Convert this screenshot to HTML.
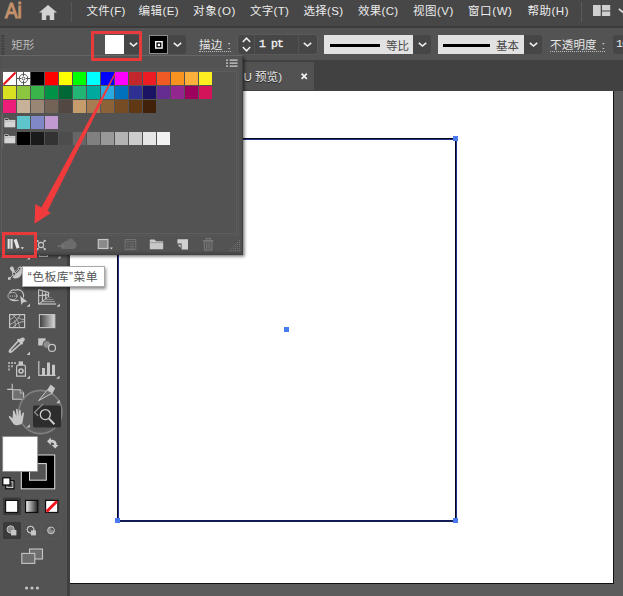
<!DOCTYPE html>
<html lang="zh"><head><meta charset="utf-8"><title>Ai</title>
<style>
*{box-sizing:border-box;margin:0;padding:0}
html,body{width:623px;height:596px;overflow:hidden;background:#535353}
body{position:relative;font-family:"Liberation Sans","Noto Sans CJK SC",sans-serif;font-size:12px;color:#e6e6e6}
.abs{position:absolute}
svg{position:absolute;overflow:visible}
.sw svg{position:static}
#menubar{left:0;top:0;width:623px;height:26px;background:#474747}
#menubar span.m{position:absolute;top:2.2px;line-height:18px;font-size:11.5px;color:#ececec;white-space:nowrap;letter-spacing:.3px}
#msep{left:0;top:26.4px;width:623px;height:1.8px;background:#3b3b3b}
#ctrl{left:0;top:28px;width:623px;height:33px;background:#535353}
#tabbar{left:0;top:60px;width:623px;height:31px;background:#414141}
#tab{left:200px;top:62px;width:114px;height:28px;background:#525252}
#canvas{left:70px;top:91px;width:553px;height:505px;background:#5c5c5c}
#artboard{left:70px;top:91px;width:544px;height:493px;background:#fff;border-right:1px solid #111;border-bottom:1px solid #111}
#tools{left:0;top:91px;width:67px;height:505px;background:#535353}
#toolsep{left:67px;top:91px;width:3px;height:505px;background:#404040}
.h{position:absolute;width:5px;height:5px;background:#4a7ee6}
#panel{left:0;top:55px;width:243.4px;height:200.4px;background:#535353;border-top:1px solid #666;border-right:1.2px solid #414141;border-bottom:1.4px solid #414141;box-shadow:1.5px 1.5px 3px rgba(0,0,0,.55),inset 0 -2px 2px rgba(0,0,0,.12)}
#pframe{left:1px;top:71px;width:236.2px;height:163.4px;border:1px solid #5d5d5d;box-shadow:0 0 0 1px #535353,0 0 0 2px #585858}
.sw{position:absolute;width:13px;height:13px}
.dd{position:absolute;top:35px;height:19px;background:#464646;border-radius:0 3px 3px 0}
.lbl{position:absolute;top:35px;line-height:20px;font-size:11.5px;letter-spacing:.2px;color:#e6e6e6;white-space:nowrap;border-bottom:1px dotted #bdbdbd;height:17px}
.lbox{position:absolute;top:35px;height:19px;background:#e2e2e2}
.lbox i{position:absolute;top:8.8px;height:3.3px;background:#000}
.lbox span{position:absolute;top:1.6px;line-height:18px;font-size:11.5px;color:#4a4a4a}
.redbox{position:absolute;border:3px solid #e83a3a}
</style></head><body>
<div id="menubar" class="abs">
<span class="abs" style="left:5px;top:-2px;font-size:21.5px;line-height:26px;color:#c4916b;-webkit-text-stroke:1.1px #c4916b;letter-spacing:0px;transform:scaleX(.88);transform-origin:0 0">Ai</span>
<svg style="left:39px;top:4.6px" width="18" height="15" viewBox="0 0 18 15"><path d="M9 0L0 7.6H2.8V15H7.3V10.4H10.7V15H15.2V7.6H18Z" fill="#d2d2d2"/></svg>
<div class="abs" style="left:70.6px;top:2px;width:1px;height:20px;background:#585858"></div>
<span class="m" style="left:86.5px">文件(F)</span>
<span class="m" style="left:138.5px;letter-spacing:0.45px">编辑(E)</span>
<span class="m" style="left:193px;letter-spacing:0.7px">对象(O)</span>
<span class="m" style="left:250px">文字(T)</span>
<span class="m" style="left:303.5px">选择(S)</span>
<span class="m" style="left:358px">效果(C)</span>
<span class="m" style="left:413px;letter-spacing:0.5px">视图(V)</span>
<span class="m" style="left:468px;letter-spacing:0.6px">窗口(W)</span>
<span class="m" style="left:527.5px;letter-spacing:0.5px">帮助(H)</span>
<div class="abs" style="left:580.5px;top:2px;width:1px;height:20px;background:#5a5a5a"></div>
<svg style="left:593px;top:5px" width="17.2" height="11"><path d="M0 0H7.7V10.9H0ZM9 0H17.2V5.6H9ZM9 6.6H17.2V10.9H9Z" fill="#cfcfcf"/></svg>
<svg style="left:618px;top:8.2px" width="9" height="5"><path d="M0.8 0.8L4.5 4L8.2 0.8" fill="none" stroke="#e0e0e0" stroke-width="1.6"/></svg>
</div>
<div id="msep" class="abs"></div>
<div id="ctrl" class="abs"></div>
<!-- control bar contents (page coords) -->
<svg style="left:1.2px;top:35px" width="4" height="20"><path d="M0 1H3.6M0 3.6H3.6M0 6.2H3.6M0 8.8H3.6M0 11.4H3.6M0 14H3.6M0 16.6H3.6M0 19.2H3.6" stroke="#3e3e3e" stroke-width="1.3"/></svg>
<span class="abs" style="left:11.2px;top:36.2px;line-height:18px;font-size:11.5px;color:#bdbdbd">矩形</span>
<div class="abs" style="left:105px;top:35px;width:19px;height:19px;background:#fff"></div>
<div class="dd" style="left:124px;width:17px;border-radius:0"></div>
<svg style="left:129px;top:42px" width="9" height="5"><path d="M0.8 0.8L4.5 4L8.2 0.8" fill="none" stroke="#f0f0f0" stroke-width="1.6"/></svg>
<div class="abs" style="left:149px;top:35px;width:19px;height:19px;background:#000;border:1px solid #8c8c8c"></div>
<svg style="left:154.6px;top:40.6px" width="8" height="8"><rect x="0.7" y="0.7" width="6.4" height="6.4" fill="none" stroke="#fff" stroke-width="1.4"/><rect x="2.7" y="2.7" width="2.4" height="2.4" fill="#fff"/></svg>
<div class="dd" style="left:168px;width:18px"></div>
<svg style="left:173px;top:42px" width="9" height="5"><path d="M0.8 0.8L4.5 4L8.2 0.8" fill="none" stroke="#f0f0f0" stroke-width="1.6"/></svg>
<span class="lbl" style="left:199px">描边<span style="margin-left:5px">:</span></span>
<div class="abs" style="left:238px;top:35px;width:78.5px;height:19px;background:#464646;border-radius:3px;box-shadow:0 0 0 0.6px #606060"></div>
<div class="abs" style="left:254px;top:35px;width:1px;height:19px;background:#535353"></div>
<div class="abs" style="left:298px;top:35px;width:1px;height:19px;background:#535353"></div>
<svg style="left:242px;top:37px" width="9" height="15"><path d="M0.8 5L4.5 1.2L8.2 5M0.8 10L4.5 13.8L8.2 10" fill="none" stroke="#f0f0f0" stroke-width="1.5"/></svg>
<span class="abs" style="left:259px;top:35px;line-height:18px;font-size:11.5px;letter-spacing:-0.9px;color:#f4f4f4;-webkit-text-stroke:.3px #f4f4f4;font-family:'Liberation Mono',monospace">1 pt</span>
<svg style="left:303px;top:42px" width="9" height="5"><path d="M0.8 0.8L4.5 4L8.2 0.8" fill="none" stroke="#f0f0f0" stroke-width="1.6"/></svg>
<div class="lbox" style="left:324px;width:89px"><i style="left:5.6px;width:50.4px"></i><span style="left:62px">等比</span></div>
<div class="dd" style="left:413px;width:18.4px"></div>
<svg style="left:418px;top:42px" width="9" height="5"><path d="M0.8 0.8L4.5 4L8.2 0.8" fill="none" stroke="#f0f0f0" stroke-width="1.6"/></svg>
<div class="lbox" style="left:438px;width:86px"><i style="left:5px;width:47px"></i><span style="left:58px">基本</span></div>
<div class="dd" style="left:524px;width:18px"></div>
<svg style="left:529px;top:42px" width="9" height="5"><path d="M0.8 0.8L4.5 4L8.2 0.8" fill="none" stroke="#f0f0f0" stroke-width="1.6"/></svg>
<span class="lbl" style="left:550px">不透明度<span style="margin-left:5px">:</span></span>
<div class="abs" style="left:613px;top:35px;width:11px;height:19px;background:#464646;border-radius:3px 0 0 3px"></div>
<span class="abs" style="left:616px;top:35px;line-height:18px;font-size:11.5px;letter-spacing:-0.9px;color:#f0f0f0;font-family:'Liberation Mono',monospace">10</span>

<div id="tabbar" class="abs"></div>
<div id="tab" class="abs"></div>
<span class="abs" style="left:243.4px;top:68.2px;line-height:18px;font-size:11.6px;color:#e8e8e8;text-shadow:0 1px 0 #222">U&nbsp;预览)</span>
<svg style="left:301px;top:73px" width="6.4" height="6.4"><path d="M0.6 0.6L5.8 5.8M5.8 0.6L0.6 5.8" stroke="#f0f0f0" stroke-width="1.8"/></svg>
<div id="canvas" class="abs"></div>
<div id="artboard" class="abs"></div>
<svg style="left:0;top:0" width="623" height="596"><rect x="118" y="139" width="338" height="382" fill="none" stroke="#05051e" stroke-width="2"/><rect x="118.6" y="139.4" width="338" height="381.6" fill="none" stroke="#3550c8" stroke-width="0.8" opacity=".8"/>
<path d="M115 136h5v5h-5zM453 136h5v5h-5zM115 518h5v5h-5zM453 518h5v5h-5zM284 327h5v5h-5z" fill="#4a7af0"/></svg>
<div id="tools" class="abs"></div>
<div id="toolsep" class="abs"></div>
<svg style="left:0;top:0" width="623" height="596"><defs><linearGradient id="gr1" x1="0" x2="1" y1="0" y2="0"><stop offset="0" stop-color="#3c3c3c"/><stop offset="1" stop-color="#d8d8d8"/></linearGradient><linearGradient id="gr2" x1="0" x2="1" y1="0" y2="0"><stop offset="0" stop-color="#f4f4f4"/><stop offset="1" stop-color="#222"/></linearGradient></defs><g id="toolicons">
<!-- partial icon above, under panel -->
<path d="M39.5 254V256.3H47.5V254" fill="none" stroke="#c6c6c6" stroke-width="1.2"/>
<path d="M30 256.5V259.5H27Z M60.5 255.5V258.5H57.5Z" fill="#c6c6c6"/>
<!-- width tool -->
<path d="M10 268.4C10 266.2 13 266 13.8 268C14.2 269.4 14 270.4 15 270.8C16.4 270.8 17.6 268 19.4 266.8C21 266 22.6 267 22.6 269C22.8 273.4 20.6 278 16 278.4C13.6 278.6 12.4 277.8 11.8 276.6C12.8 274.4 12.6 272.6 11.6 271.2C10.8 270.2 10 269.6 10 268.4Z" fill="#c6c6c6"/>
<path d="M9.4 278.4L19.6 268.6" stroke="#535353" stroke-width="2.4"/>
<path d="M9.4 278.4L19.6 268.6" stroke="#c6c6c6" stroke-width="0.9"/>
<circle cx="14.2" cy="273.8" r="1.6" fill="#535353" stroke="#c6c6c6" stroke-width="0.9"/>
<circle cx="19.5" cy="268.7" r="1.3" fill="#535353" stroke="#c6c6c6" stroke-width="0.8"/>
<rect x="8" y="277.2" width="2.6" height="2.6" fill="#c6c6c6"/>
<!-- shape builder -->
<ellipse cx="12.4" cy="296" rx="4.4" ry="3.6" fill="none" stroke="#b8b8b8" stroke-width="0.9"/>
<path d="M9.6 293.4C10 290.6 13 289 15.6 290.2C18.4 288.8 22.6 290.4 23.4 294C24 296 23.4 297.4 23 298M18.6 300C16 301.2 12 300.6 10.2 299.2" fill="none" stroke="#c6c6c6" stroke-width="1.2"/>
<circle cx="10.4" cy="296" r="0.6" fill="#d6d6d6"/><circle cx="12.6" cy="296" r="0.6" fill="#d6d6d6"/><circle cx="14.8" cy="296" r="0.6" fill="#d6d6d6"/><circle cx="17.2" cy="296" r="0.6" fill="#d6d6d6"/>
<path d="M19.8 295.4L28 301.8L23.6 302.4L21.2 305.4Z" fill="#cdcdcd" stroke="#535353" stroke-width="0.6"/>
<path d="M30 303.5V306.8H26.7Z" fill="#c6c6c6"/>
<!-- perspective grid -->
<path d="M38.6 289.4V304.4M38.6 289.6L48.6 292.4V296.6L38.6 304.4M42.4 290.6V301.4M45.7 291.6V299M38.6 295.8L48.6 294.6" fill="none" stroke="#c6c6c6" stroke-width="1.1"/>
<path d="M47 297.5H51.6" stroke="#7a7a7a" stroke-width="1"/>
<path d="M44.2 299.6H53.6" stroke="#959595" stroke-width="1"/>
<path d="M42 301.7H55" stroke="#adadad" stroke-width="1"/>
<path d="M39 304H56.2" stroke="#c6c6c6" stroke-width="1.2"/>
<path d="M59.8 303.6V306.8H56.6Z" fill="#c6c6c6"/>
<!-- mesh -->
<rect x="9.6" y="314.6" width="15" height="13" fill="none" stroke="#c6c6c6" stroke-width="1.2"/>
<path d="M9.6 319.6C12.6 318.6 14.6 316.8 15.4 314.6M9.6 324.6C13.6 323.2 18.6 319.4 20.4 314.6M12.6 327.6C15 324.4 20 321.6 24.6 321.4M12.4 314.6C16 317.6 19.6 323 19.4 327.6M17.6 317.4C20 319 22.6 319.6 24.6 319.4M14.6 320.4C15.4 323 15.4 325.4 15 327.6" fill="none" stroke="#c0c0c0" stroke-width="0.85"/>
<!-- gradient -->
<rect x="39.4" y="314.6" width="15.4" height="13" fill="url(#gr1)" stroke="#c6c6c6" stroke-width="1.1"/>
<!-- eyedropper -->
<path d="M22.2 337.6C23.6 337 25.2 338.4 24.8 340L22.6 342.8L23.2 343.6L22 344.8L21.2 344.2L12.6 352C11.4 353 9.8 353.2 9 352.6C8.2 351.8 8.6 350.4 9.6 349.2L17.6 340.6L17 339.8L18.2 338.6L19 339.2Z" fill="#c6c6c6"/>
<path d="M18.6 341.8L11 350.2C10.6 350.8 11 351.2 11.6 350.8L20 343.2Z" fill="#535353"/>
<path d="M30 351.6V354.9H26.7Z" fill="#c6c6c6"/>
<!-- blend -->
<rect x="38.2" y="338.3" width="7.4" height="7.2" fill="#c6c6c6"/>
<circle cx="46.9" cy="344.5" r="3.9" fill="#8e8e8e" stroke="#535353" stroke-width="1"/>
<circle cx="52" cy="347.9" r="3.5" fill="#535353" stroke="#c6c6c6" stroke-width="1.2"/>
<!-- symbol sprayer -->
<path d="M8 362h2v2h-2zM11 362h2v2h-2zM14 362h2v2h-2zM8 365.2h2v2h-2zM11 365.2h2v2h-2zM8 368.4h2v2h-2z" fill="#a8a8a8"/>
<path d="M18.6 361.4H23V365H18.6Z" fill="#c6c6c6"/>
<path d="M16.6 376.2V366.8Q16.6 365.4 18 365.2H24Q25.4 365.4 25.4 366.8V376.2Z" fill="none" stroke="#c6c6c6" stroke-width="1.2"/>
<circle cx="21" cy="371" r="2" fill="none" stroke="#c6c6c6" stroke-width="1.6"/>
<path d="M30 375.5V378.8H26.7Z" fill="#c6c6c6"/>
<!-- graph -->
<path d="M38.8 361V375.3H55.6" fill="none" stroke="#c6c6c6" stroke-width="1.2"/>
<path d="M42 368H45V375H42ZM47 362.5H50V375H47ZM52 364.8H55V375H52Z" fill="#c6c6c6"/>
<path d="M59.5 375.5V378.8H56.2Z" fill="#c6c6c6"/>
<!-- artboard -->
<path d="M12.2 383.8V389.6M7.2 389.4H12.6" stroke="#c6c6c6" stroke-width="1.1"/>
<path d="M12.7 389.7H20.2L23.6 393V399.2H12.7Z" fill="#707070" stroke="#c6c6c6" stroke-width="1.1"/>
<path d="M20.2 389.7V393H23.6" fill="#535353" stroke="#c6c6c6" stroke-width="0.9"/>
<!-- zoom ring -->
<circle cx="40.4" cy="412" r="21.6" fill="rgba(255,255,255,0.05)" stroke="#808080" stroke-width="1.6"/>
<!-- slice -->
<path d="M50.6 384.6L55.2 388.2L52.6 393L47.2 390Z" fill="#c6c6c6"/>
<path d="M47.2 390L52.6 393L38.6 400.6Z" fill="#6a6a6a" stroke="#c6c6c6" stroke-width="1"/>
<path d="M59.5 400V403.3H56.2Z" fill="#c6c6c6"/>
<!-- selected zoom tool -->
<rect x="33" y="405.5" width="28" height="22" rx="2" fill="#2d2d2d"/>
<circle cx="45.3" cy="414.6" r="5" fill="none" stroke="#cecece" stroke-width="1.3"/>
<path d="M49 418.6L54.4 424.2" stroke="#cecece" stroke-width="2"/>
<path d="M43 404L34.6 412.2L38.2 416" fill="none" stroke="#8a8a8a" stroke-width="1.3"/>
<path d="M29.8 424.2V427.5H26.5Z M59.6 400V403H56.6Z" fill="#c6c6c6"/>
<!-- hand -->
<path d="M12.6 418.6L10.2 416.2C9.4 415.4 8.4 416.4 9 417.4L13.2 423.6C14 424.8 15.4 425.4 17 425.2L20.4 424.6C21.6 424.2 22.4 423.2 22.6 422L24 413.6C24.2 412.4 22.8 412.2 22.4 413.2L21.2 416.6L20.6 410.6C20.4 409.4 19 409.6 19 410.6L18.8 415.8L17.6 409.6C17.4 408.4 16 408.6 16 409.8L16.4 416L14.4 411C14 410 12.6 410.4 13 411.6Z" fill="#c6c6c6"/>
<!-- swap arrow -->
<path d="M47 441.2L50.8 437.4V439.8C55.2 439.6 57 442.2 56.6 445H58.6L55.2 448.6L51.8 445H54C54.2 443.2 53.2 442.6 50.8 442.6V445Z" fill="#d0d0d0"/>
<!-- fill & stroke -->
<rect x="21.3" y="455" width="33.4" height="33.8" fill="#000" stroke="#e0e0e0" stroke-width="1"/>
<rect x="29.5" y="463.6" width="16.8" height="16.6" fill="#535353" stroke="#e0e0e0" stroke-width="1"/>
<rect x="2.7" y="436.5" width="35" height="35" fill="#fff" stroke="#8a8a8a" stroke-width="0.8"/>
<!-- default fill/stroke -->
<rect x="6.4" y="481.4" width="7" height="6.8" fill="#535353" stroke="#000" stroke-width="2.2"/>
<rect x="6.9" y="481.9" width="6" height="5.8" fill="none" stroke="#fff" stroke-width="0.9"/>
<rect x="2.8" y="477.8" width="7.2" height="7.2" fill="#fff" stroke="#000" stroke-width="1.2"/>
<!-- color / gradient / none -->
<rect x="3" y="497.5" width="18" height="17.5" rx="1.5" fill="#3a3a3a"/>
<rect x="23" y="497.5" width="18" height="17.5" rx="1.5" fill="#4f4f4f" stroke="#5c5c5c" stroke-width="0.6"/>
<rect x="43" y="497.5" width="18" height="17.5" rx="1.5" fill="#4f4f4f" stroke="#5c5c5c" stroke-width="0.6"/>
<rect x="5.6" y="500.4" width="12.2" height="12" fill="#fff" stroke="#0a0a0a" stroke-width="1.1"/>
<rect x="25.6" y="500.4" width="12.2" height="12" fill="url(#gr2)" stroke="#0a0a0a" stroke-width="1.1"/>
<rect x="45.6" y="500.4" width="12.2" height="12" fill="#fff" stroke="#0a0a0a" stroke-width="1.1"/>
<path d="M46.6 511.6L57 501.2" stroke="#f0141e" stroke-width="2.9"/>
<!-- draw modes -->
<rect x="3" y="522" width="18" height="17" rx="1.5" fill="#3a3a3a"/>
<rect x="22" y="522" width="19" height="17" rx="1.5" fill="none" stroke="#5c5c5c" stroke-width="0.6"/>
<rect x="42" y="522" width="19" height="17" rx="1.5" fill="none" stroke="#5c5c5c" stroke-width="0.6"/>
<circle cx="10.6" cy="529.4" r="3.6" fill="#8a8a8a" stroke="#c6c6c6" stroke-width="1"/>
<rect x="11" y="530" width="5.4" height="5.4" fill="#c6c6c6"/>
<circle cx="30.6" cy="529.6" r="3.4" fill="#535353" stroke="#c6c6c6" stroke-width="1"/>
<rect x="31" y="530.4" width="5" height="5" fill="#c6c6c6"/>
<circle cx="30.6" cy="529.6" r="3.4" fill="none" stroke="#c6c6c6" stroke-width="1"/>
<circle cx="51" cy="530.4" r="3.4" fill="#8a8a8a" stroke="#c6c6c6" stroke-width="1"/>
<path d="M51.2 530.2V527.4A3 3 0 0 1 54 530.2Z" fill="#535353"/>
<!-- screen mode -->
<rect x="29.5" y="549" width="13" height="10" fill="#6e6e6e" stroke="#c6c6c6" stroke-width="1.1"/>
<rect x="21.8" y="553.4" width="13" height="10" fill="#6e6e6e" stroke="#c6c6c6" stroke-width="1.1"/>
<circle cx="26.6" cy="588" r="1.6" fill="#c6c6c6"/><circle cx="32" cy="588" r="1.6" fill="#c6c6c6"/><circle cx="37.4" cy="588" r="1.6" fill="#c6c6c6"/>
</g>
</svg>
<div id="panel" class="abs"></div>
<div id="pframe" class="abs"></div>
<div class="abs" style="left:2px;top:114px;width:1px;height:33px;background:#676767"></div>
<svg style="left:225.6px;top:59px" width="12" height="9"><path d="M0 1.2H2M3.6 1.2H11.6M0 4.2H2M3.6 4.2H11.6M0 7.2H2M3.6 7.2H11.6" stroke="#cfcfcf" stroke-width="1.2"/></svg>
<div class="sw" style="left:3px;top:72px;background:#fff"><svg width="13" height="13" style="display:block"><line x1="0.5" y1="12.5" x2="12.5" y2="0.5" stroke="#e8141c" stroke-width="2.2"/></svg></div>
<div class="sw" style="left:17px;top:72px;background:#fff"><svg width="13" height="13" style="display:block" fill="none" stroke="#3c3c3c" stroke-width="0.85"><circle cx="6.5" cy="6.5" r="4.3"/><circle cx="6.5" cy="6.5" r="1.5"/><path d="M6.5 0V4M6.5 9V13M0 6.5H4M9 6.5H13"/></svg></div>
<div class="sw" style="left:31px;top:72px;background:#000000"></div>
<div class="sw" style="left:45px;top:72px;background:#ff0000"></div>
<div class="sw" style="left:59px;top:72px;background:#ffff00"></div>
<div class="sw" style="left:73px;top:72px;background:#00ff00"></div>
<div class="sw" style="left:87px;top:72px;background:#00ffff"></div>
<div class="sw" style="left:101px;top:72px;background:#0000ff"></div>
<div class="sw" style="left:115px;top:72px;background:#ff00ff"></div>
<div class="sw" style="left:129px;top:72px;background:#c1272d"></div>
<div class="sw" style="left:143px;top:72px;background:#ed1c24"></div>
<div class="sw" style="left:157px;top:72px;background:#f15a24"></div>
<div class="sw" style="left:171px;top:72px;background:#f7931e"></div>
<div class="sw" style="left:185px;top:72px;background:#fbb03b"></div>
<div class="sw" style="left:199px;top:72px;background:#fcee21"></div>
<div class="sw" style="left:3px;top:86px;background:#d9e021"></div>
<div class="sw" style="left:17px;top:86px;background:#8cc63f"></div>
<div class="sw" style="left:31px;top:86px;background:#39b54a"></div>
<div class="sw" style="left:45px;top:86px;background:#009245"></div>
<div class="sw" style="left:59px;top:86px;background:#006837"></div>
<div class="sw" style="left:73px;top:86px;background:#22b573"></div>
<div class="sw" style="left:87px;top:86px;background:#00a99d"></div>
<div class="sw" style="left:101px;top:86px;background:#29abe2"></div>
<div class="sw" style="left:115px;top:86px;background:#0071bc"></div>
<div class="sw" style="left:129px;top:86px;background:#2e3192"></div>
<div class="sw" style="left:143px;top:86px;background:#1b1464"></div>
<div class="sw" style="left:157px;top:86px;background:#662d91"></div>
<div class="sw" style="left:171px;top:86px;background:#93278f"></div>
<div class="sw" style="left:185px;top:86px;background:#9e005d"></div>
<div class="sw" style="left:199px;top:86px;background:#d4145a"></div>
<div class="sw" style="left:3px;top:100px;background:#ed1e79"></div>
<div class="sw" style="left:17px;top:100px;background:#c7b299"></div>
<div class="sw" style="left:31px;top:100px;background:#998675"></div>
<div class="sw" style="left:45px;top:100px;background:#736357"></div>
<div class="sw" style="left:59px;top:100px;background:#534741"></div>
<div class="sw" style="left:73px;top:100px;background:#c69c6d"></div>
<div class="sw" style="left:87px;top:100px;background:#a67c52"></div>
<div class="sw" style="left:101px;top:100px;background:#8c6239"></div>
<div class="sw" style="left:115px;top:100px;background:#754c24"></div>
<div class="sw" style="left:129px;top:100px;background:#603813"></div>
<div class="sw" style="left:143px;top:100px;background:#42210b"></div>
<svg class="abs" style="left:4px;top:118px" width="12" height="10"><path d="M0.3 1.9H11.3V9.3H0.3Z" fill="#d6d6d6"/><path d="M0.3 2V0.9Q0.3 0.3 0.9 0.3H4.2L5.2 2Z" fill="#c4c4c4"/><path d="M1 1.5H4.2" stroke="#3c3c3c" stroke-width="1.1"/><path d="M0.3 3.3H11.3" stroke="#a8a8a8" stroke-width="0.6"/></svg>
<div class="sw" style="left:17px;top:116px;background:#5ec4cc"></div>
<div class="sw" style="left:31px;top:116px;background:#8088c8"></div>
<div class="sw" style="left:45px;top:116px;background:#c09ad0"></div>
<svg class="abs" style="left:4px;top:134px" width="12" height="10"><path d="M0.3 1.9H11.3V9.3H0.3Z" fill="#d6d6d6"/><path d="M0.3 2V0.9Q0.3 0.3 0.9 0.3H4.2L5.2 2Z" fill="#c4c4c4"/><path d="M1 1.5H4.2" stroke="#3c3c3c" stroke-width="1.1"/><path d="M0.3 3.3H11.3" stroke="#a8a8a8" stroke-width="0.6"/></svg>
<div class="sw" style="left:17px;top:132px;background:#000000"></div>
<div class="sw" style="left:31px;top:132px;background:#1a1a1a"></div>
<div class="sw" style="left:45px;top:132px;background:#333333"></div>
<div class="sw" style="left:59px;top:132px;background:#4d4d4d"></div>
<div class="sw" style="left:73px;top:132px;background:#666666"></div>
<div class="sw" style="left:87px;top:132px;background:#808080"></div>
<div class="sw" style="left:101px;top:132px;background:#999999"></div>
<div class="sw" style="left:115px;top:132px;background:#b3b3b3"></div>
<div class="sw" style="left:129px;top:132px;background:#cccccc"></div>
<div class="sw" style="left:143px;top:132px;background:#e6e6e6"></div>
<div class="sw" style="left:157px;top:132px;background:#f2f2f2"></div>
<svg style="left:0;top:0" width="623" height="596"><g id="panelicons">
<!-- library -->
<path d="M7.6 239H9.7V248.8H7.6ZM10.5 239H12.6V248.8H10.5Z" fill="#e4e4e4"/>
<path d="M13.6 240L16.6 238.8L19.6 247.6L16.6 248.8Z" fill="#e4e4e4"/>
<path d="M20.6 247.2H24L22.3 249.2Z" fill="#e4e4e4"/>
<!-- swatch kinds -->
<circle cx="41" cy="245" r="2.6" fill="none" stroke="#c6c6c6" stroke-width="1.1"/>
<path d="M38 241.4L40 243.4M44.4 241L42.6 243M38 248.8L39.8 246.8M44.4 249L42.8 247" stroke="#c6c6c6" stroke-width="1"/>
<circle cx="37.6" cy="241" r="1.1" fill="#c6c6c6"/><circle cx="44.8" cy="240.8" r="1.1" fill="#c6c6c6"/><circle cx="37.6" cy="249.2" r="1.1" fill="#c6c6c6"/><circle cx="44.8" cy="249.2" r="1.1" fill="#c6c6c6"/>
<!-- cloud (dim) -->
<path d="M64 249C61.4 249 60.6 245.4 63 244.4C62.6 241.6 65.4 240.2 67 241.4C68.2 237.6 73.4 237.6 74 241.6C77.4 241.8 77.6 248.2 74 249Z" fill="#6c6c6c"/>
<path d="M57.6 246H63.5M61.5 243.6L64 246L61.5 248.4" fill="none" stroke="#747474" stroke-width="1.4"/>
<!-- new color group square -->
<rect x="98.3" y="239.5" width="9.6" height="9" fill="#8a8a8a" stroke="#c6c6c6" stroke-width="1.2"/>
<path d="M109.6 247.4H113L111.3 249.4Z" fill="#c6c6c6"/>
<!-- list (dim) -->
<rect x="125.2" y="239.6" width="10.6" height="10" fill="none" stroke="#747474" stroke-width="1"/>
<path d="M125.2 241.8H135.8M127 244.2H128.4M129.6 244.2H134.2M127 246.4H128.4M129.6 246.4H134.2M127 248.2H128.4M129.6 248.2H134.2" stroke="#747474" stroke-width="0.9"/>
<!-- folder -->
<path d="M149.8 240.2Q149.8 239.4 150.6 239.4H154.6L156.2 241.2H162.4Q163.2 241.2 163.2 242V249.2H149.8Z" fill="#c8c8c8"/>
<path d="M149.8 242.6H163.2" stroke="#8a8a8a" stroke-width="0.7"/>
<!-- new -->
<path d="M177.4 239.2H188V249.4H181.6V243.6H177.4Z" fill="#d0d0d0"/>
<path d="M177.8 244.8H180.6V247.8Z" fill="#d0d0d0"/>
<!-- trash (dim) -->
<path d="M203 240.6H213.4M206.2 240.2V238.4H210.2V240.2" fill="none" stroke="#767676" stroke-width="1.2"/>
<path d="M204.2 241.4H212.2L211.8 250.2H204.6Z" fill="none" stroke="#767676" stroke-width="1.2"/>
<path d="M206.5 242.6V248.8M208.2 242.6V248.8M209.9 242.6V248.8" stroke="#767676" stroke-width="1"/>
<!-- grip -->
<path d="M239.00 240.00h.9v.9h-.9zM239.00 242.05h.9v.9h-.9zM236.95 242.05h.9v.9h-.9zM239.00 244.10h.9v.9h-.9zM236.95 244.10h.9v.9h-.9zM234.90 244.10h.9v.9h-.9zM239.00 246.15h.9v.9h-.9zM236.95 246.15h.9v.9h-.9zM234.90 246.15h.9v.9h-.9zM232.85 246.15h.9v.9h-.9zM239.00 248.20h.9v.9h-.9zM236.95 248.20h.9v.9h-.9zM234.90 248.20h.9v.9h-.9zM232.85 248.20h.9v.9h-.9zM230.80 248.20h.9v.9h-.9zM239.00 250.25h.9v.9h-.9zM236.95 250.25h.9v.9h-.9zM234.90 250.25h.9v.9h-.9zM232.85 250.25h.9v.9h-.9zM230.80 250.25h.9v.9h-.9zM228.75 250.25h.9v.9h-.9z" fill="#7c7c7c"/>
</g>
</svg>
<svg style="left:0;top:0" width="623" height="596"><polygon points="115.6,74 47.6,210.8 50.8,213 34.5,223.8 35.3,204 41.4,207.4 114.4,73.4" fill="#f03a3c"/></svg>
<div class="redbox" style="left:91px;top:30.6px;width:51px;height:30.2px"></div>
<div class="redbox" style="left:1.6px;top:232px;width:35.5px;height:25.5px"></div>
<div class="abs" style="left:22.3px;top:266.3px;width:83px;height:20.7px;background:#fff;border:1px solid #a8a8a8;box-shadow:1px 2px 3px rgba(0,0,0,.45)"></div>
<span class="abs" style="left:27.8px;top:268px;line-height:18px;font-size:11.9px;color:#555;white-space:nowrap;letter-spacing:.4px">“色板库”菜单</span>
</body></html>
